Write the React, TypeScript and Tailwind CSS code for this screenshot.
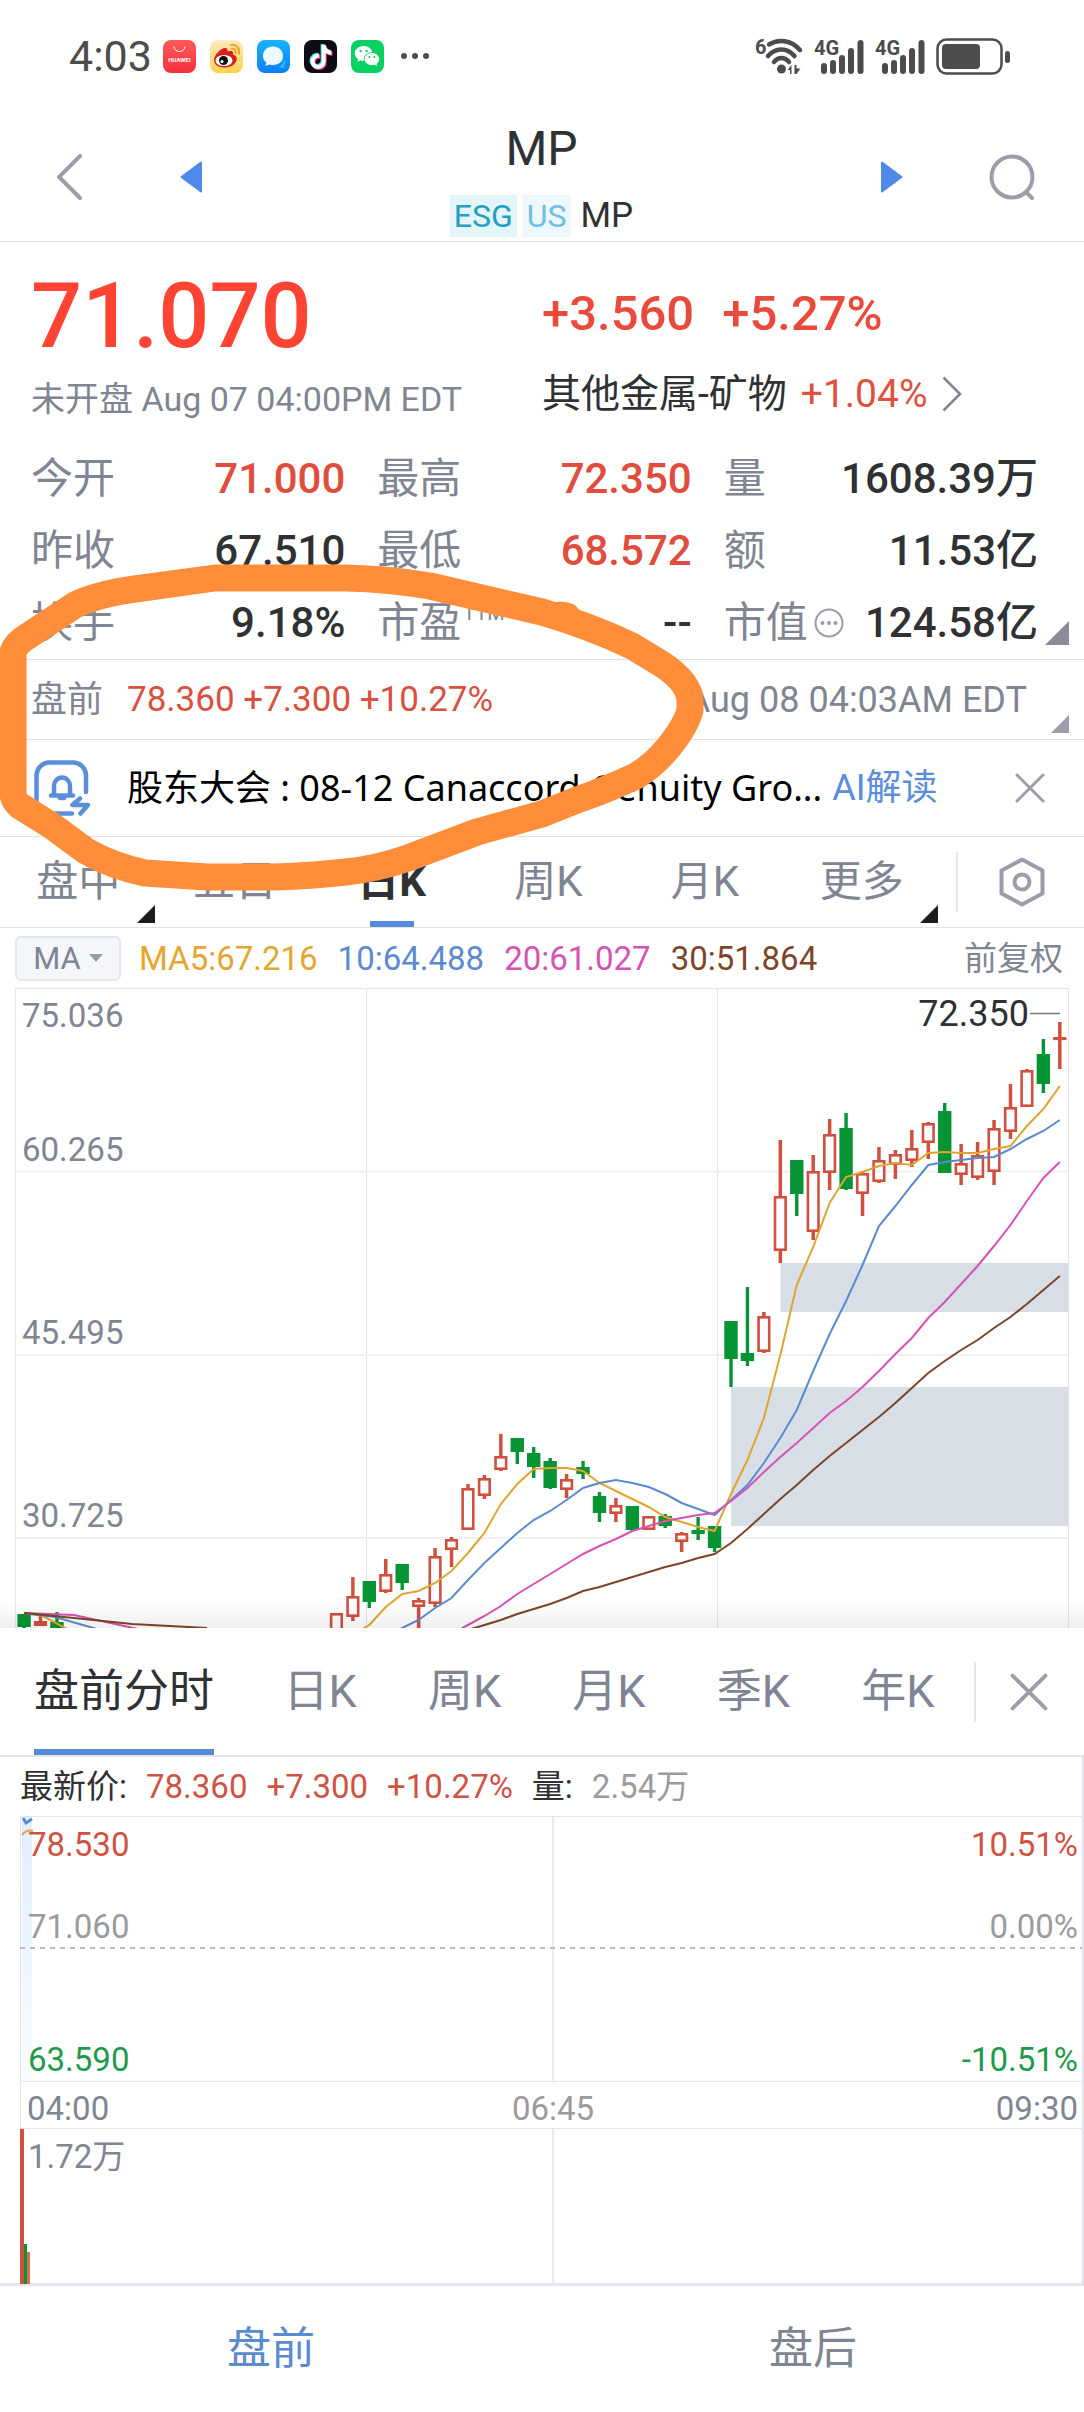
import { FaTiktok } from "react-icons/fa";
import { AiFillWechat } from "react-icons/ai";
import clsx from "clsx";

type Candle = {
  // bars back from the latest one
  k: number;
  up: boolean;
  high: number;
  top: number;
  bottom: number;
  low: number;
};

const STEP = 16.44;
const LAST_X = 1059.8;
const RED = "#d14f3f";
const GREEN = "#079434";

const barX = (k: number) => LAST_X - STEP * k;

const raw: [number, 0 | 1, number, number, number, number][] = [
  [0, 1, 1022, 1037, 1040, 1069],
  [1, 0, 1039, 1054, 1084, 1093],
  [2, 1, 1069, 1070, 1107, 1107],
  [3, 1, 1084, 1107, 1132, 1139],
  [4, 1, 1120, 1128, 1172, 1185],
  [5, 1, 1142, 1155, 1178, 1180],
  [6, 1, 1144, 1163, 1175, 1185],
  [7, 0, 1103, 1111, 1173, 1173],
  [8, 1, 1122, 1123, 1143, 1159],
  [9, 1, 1130, 1148, 1161, 1167],
  [10, 1, 1150, 1154, 1165, 1179],
  [11, 1, 1147, 1160, 1182, 1183],
  [12, 1, 1171, 1173, 1194, 1216],
  [13, 0, 1113, 1128, 1189, 1190],
  [14, 1, 1119, 1134, 1173, 1190],
  [15, 1, 1155, 1171, 1232, 1240],
  [16, 0, 1160, 1160, 1194, 1216],
  [17, 1, 1140, 1196, 1251, 1263],
  [18, 1, 1312, 1316, 1352, 1353],
  [19, 0, 1287, 1353, 1361, 1366],
  [20, 0, 1321, 1321, 1359, 1387],
  [21, 0, 1526, 1526, 1548, 1552],
  [22, 0, 1517, 1530, 1534, 1540],
  [23, 1, 1532, 1533, 1542, 1552],
  [24, 0, 1514, 1516, 1526, 1528],
  [25, 1, 1516, 1516, 1530, 1530],
  [26, 0, 1506, 1506, 1530, 1531],
  [27, 1, 1498, 1505, 1514, 1522],
  [28, 0, 1492, 1496, 1513, 1522],
  [29, 0, 1461, 1467, 1474, 1479],
  [30, 1, 1474, 1479, 1490, 1498],
  [31, 0, 1458, 1461, 1488, 1489],
  [32, 0, 1447, 1453, 1467, 1478],
  [33, 0, 1438, 1438, 1452, 1464],
  [34, 1, 1434, 1456, 1470, 1471],
  [35, 1, 1475, 1478, 1496, 1499],
  [36, 1, 1484, 1488, 1530, 1530],
  [37, 1, 1537, 1539, 1550, 1567],
  [38, 1, 1548, 1556, 1604, 1607],
  [39, 1, 1598, 1600, 1607, 1640],
  [40, 0, 1564, 1564, 1583, 1590],
  [41, 1, 1559, 1574, 1592, 1593],
  [42, 0, 1581, 1581, 1602, 1608],
  [43, 1, 1577, 1596, 1617, 1621],
  [44, 1, 1613, 1613, 1640, 1640],
  [61, 0, 1612, 1622, 1640, 1640],
  [62, 1, 1616, 1621, 1626, 1626],
  [63, 0, 1614, 1614, 1627, 1640],
];

const candles: Candle[] = raw.map(([k, up, high, top, bottom, low]) => ({
  k,
  up: up === 1,
  high,
  top,
  bottom,
  low,
}));

// newest value first
const averages = [
  {
    color: "#e0a52f",
    values: [
      1086, 1109, 1126, 1146, 1149, 1153, 1153, 1152, 1153, 1165, 1163, 1166,
      1172, 1177, 1203, 1247, 1285, 1355, 1418, 1460, 1494, 1531, 1527, 1522,
      1517, 1507, 1499, 1491, 1483, 1471, 1468, 1468, 1469, 1484, 1504, 1533,
      1553, 1571, 1583, 1591, 1594, 1607, 1625, 1635,
    ],
  },
  {
    color: "#5a8bd0",
    values: [
      1120, 1131, 1139, 1149, 1157, 1158, 1160, 1162, 1165, 1185, 1206, 1226,
      1265, 1301, 1334, 1371, 1410, 1438, 1463, 1485, 1500, 1515, 1509, 1503,
      1494, 1487, 1483, 1480, 1483, 1488, 1500, 1511, 1520, 1533, 1548, 1563,
      1580, 1598, 1608, 1620, 1628, 1637,
    ],
  },
  {
    color: "#d652b4",
    values: [
      1162, 1178, 1201, 1225, 1246, 1266, 1284, 1302, 1318, 1338, 1354, 1371,
      1387, 1401, 1413, 1428, 1443, 1457, 1472, 1488, 1501, 1513, 1515, 1518,
      1521, 1526, 1531, 1539, 1546, 1554, 1564, 1574, 1584, 1594, 1606, 1616,
      1625, 1634,
    ],
  },
  {
    color: "#7d4528",
    values: [
      1276, 1290, 1304, 1317, 1328, 1340, 1350, 1361, 1373, 1388, 1403, 1417,
      1430, 1443, 1456, 1470, 1485, 1499, 1514, 1529, 1543, 1554, 1558, 1563,
      1567, 1572, 1577, 1582, 1587, 1591, 1598, 1604, 1609, 1614, 1620, 1625,
      1630,
    ],
  },
];

const stats = [
  { label: "今开", value: "71.000", up: true },
  { label: "最高", value: "72.350", up: true },
  { label: "量", value: "1608.39万" },
  { label: "昨收", value: "67.510" },
  { label: "最低", value: "68.572", up: true },
  { label: "额", value: "11.53亿" },
  { label: "换手", value: "9.18%" },
  { label: "市盈", value: "--", note: "TTM" },
  { label: "市值", value: "124.58亿", info: true },
];

const periods = ["盘中", "五日", "日K", "周K", "月K", "更多"];
const panelPeriods = ["日K", "周K", "月K", "季K", "年K"];

function Corner({ className }: { className: string }) {
  return (
    <svg viewBox="0 0 10 10" className={clsx("absolute", className)}>
      <path d="M10 0V10H0Z" fill="currentColor" />
    </svg>
  );
}

function CloseIcon({ className }: { className: string }) {
  return (
    <svg viewBox="0 0 30 30" className={className}>
      <path
        d="M2 2 28 28M28 2 2 28"
        stroke="#9c9da8"
        strokeWidth="3"
        strokeLinecap="round"
      />
    </svg>
  );
}

function AppIcons() {
  return (
    <div className="flex items-center gap-3.5">
      <svg viewBox="0 0 33 33" className="size-[33px]">
        <defs>
          <linearGradient id="hw" x1="0" y1="0" x2="0" y2="1">
            <stop offset="0" stopColor="#ff5a58" />
            <stop offset="1" stopColor="#f52f3c" />
          </linearGradient>
        </defs>
        <rect width="33" height="33" rx="8" fill="url(#hw)" />
        <path
          d="M11 6.500a5.500 5 0 0 0 11 0"
          fill="none"
          stroke="#fff"
          strokeWidth="1"
        />
        <text
          x="16.500"
          y="21.500"
          fontSize="6"
          fontWeight="700"
          fill="#fff"
          textAnchor="middle"
        >
          HUAWEI
        </text>
      </svg>
      <svg viewBox="0 0 33 33" className="size-[33px]">
        <defs>
          <linearGradient id="wb" x1="0" y1="0" x2="0" y2="1">
            <stop offset="0" stopColor="#fdeac0" />
            <stop offset="1" stopColor="#ffd24a" />
          </linearGradient>
        </defs>
        <rect width="33" height="33" rx="8" fill="url(#wb)" />
        <path
          d="M4 20c0-5 7-12 11-12 2 0 3 1 2.500 3.500C21 10 24 11 23 14.500c3 1 4.500 3 3.500 6C25 25 20 27.500 14.500 27.500 8 27.500 4 24.500 4 20Z"
          fill="#d8201c"
        />
        <ellipse cx="14" cy="20.500" rx="8.500" ry="5.500" fill="#fff" />
        <circle cx="13.500" cy="20.500" r="4.500" fill="#111" />
        <circle cx="12" cy="21.500" r="1.500" fill="#fff" />
        <path
          d="M21 5c5-1 9 3 8 8.500M21.500 8.800c3-.5 4.500 1.500 4 4.200"
          fill="none"
          stroke="#f0a030"
          strokeWidth="2"
          strokeLinecap="round"
        />
      </svg>
      <svg viewBox="0 0 33 33" className="size-[33px]">
        <defs>
          <linearGradient id="msg" x1="0" y1="0" x2="0" y2="1">
            <stop offset="0" stopColor="#18b4fb" />
            <stop offset="1" stopColor="#0a80f4" />
          </linearGradient>
        </defs>
        <rect width="33" height="33" rx="8" fill="url(#msg)" />
        <path d="M20 27c5 0 6-3 7.500-8 1 4 0 6-1 6.500l1.500 2Z" fill="#31c4f8" />
        <path
          d="M16 6.500c6 0 10 4 10 9.500s-4 9-10 9c-1.500 0-2.500 0-3.500-.5L8.500 26l.8-3.500C7 21 6 18.500 6 16c0-5.500 4-9.500 10-9.500Z"
          fill="#eef8ff"
        />
      </svg>
      <span className="relative size-[33px] rounded-lg bg-[#0c0c16]">
        <FaTiktok className="absolute top-1 left-1 size-6 text-[#43e0dc]" />
        <FaTiktok className="absolute top-[6px] left-[6px] size-6 text-[#ee3357]" />
        <FaTiktok className="absolute top-[5px] left-[5px] size-6 text-white" />
      </span>
      <span className="flex size-[33px] items-center justify-center rounded-lg bg-[#07d163]">
        <AiFillWechat className="size-7 text-white" />
      </span>
    </div>
  );
}

function Signal() {
  return (
    <svg
      viewBox="0 0 50 36"
      className="h-9 w-[50px] overflow-visible"
      fill="#4c4c4c"
    >
      <text x="0" y="17" fontSize="20" fontWeight="700">
        4G
      </text>
      <rect x="7" y="25" width="6" height="11" rx="3" />
      <rect x="16" y="22" width="6" height="14" rx="3" />
      <rect x="25" y="17" width="6" height="19" rx="3" />
      <rect x="34" y="10" width="6" height="26" rx="3" />
      <rect x="43.500" y="2" width="6" height="34" rx="3" />
    </svg>
  );
}

function StatusBar() {
  return (
    <div className="flex h-28 items-center justify-between pr-[74px] pl-[69px]">
      <div className="flex items-center">
        <span className="mr-[11px] text-[43px] leading-none text-[#4c4c4c]">
          4:03
        </span>
        <AppIcons />
        <svg viewBox="0 0 28 6" className="ml-[17px] h-1.5 w-7" fill="#4c4c4c">
          <circle cx="3" cy="3" r="3" />
          <circle cx="14" cy="3" r="3" />
          <circle cx="25" cy="3" r="3" />
        </svg>
      </div>
      <div className="flex items-center gap-[11px]">
        <svg
          viewBox="0 0 48 36"
          className="h-9 w-12 overflow-visible"
          fill="#4c4c4c"
        >
          <text x="0" y="16" fontSize="20" fontWeight="700">
            6
          </text>
          <g
            fill="none"
            stroke="#4c4c4c"
            strokeWidth="4.500"
            strokeLinecap="round"
          >
            <path d="M14 6.500C23 .8 36 1.500 45 12" />
            <path d="M13 18C20 9.500 32 9 39.500 18" />
            <path d="M19 24c4-5.500 11-5.500 15 0" />
          </g>
          <circle cx="26.500" cy="31" r="4.500" />
          <path d="M32.500 32l4-5v9h-1.500v-4zM39.500 27h2v3.500h4L41.500 36h-2z" />
        </svg>
        <Signal />
        <Signal />
        <svg viewBox="0 0 74 37" className="h-[37px] w-[74px]">
          <rect
            x="1.500"
            y="1.500"
            width="64"
            height="34"
            rx="9"
            fill="none"
            stroke="#4c4c4c"
            strokeWidth="2.500"
          />
          <rect x="6" y="6" width="38" height="25" rx="4" fill="#4c4c4c" />
          <rect x="69" y="13" width="5" height="12" rx="2.500" fill="#4c4c4c" />
        </svg>
      </div>
    </div>
  );
}

function Header() {
  return (
    <header className="flex h-[130px] items-center justify-between border-b border-[#e2e2e6] pr-[49px] pl-[57px]">
      <div className="flex items-center gap-[98px]">
        <button type="button" aria-label="返回">
          <svg viewBox="0 0 25 46" className="h-[46px] w-[25px]">
            <path
              d="M23 2 2 23l21 21"
              fill="none"
              stroke="#9c9da8"
              strokeWidth="4"
              strokeLinecap="round"
            />
          </svg>
        </button>
        <button type="button" aria-label="上一个">
          <svg viewBox="0 0 22 32" className="h-8 w-[22px]">
            <path
              d="M21 1.500v29L1.500 16Z"
              fill="#4f8ae8"
              stroke="#4f8ae8"
              strokeWidth="2"
              strokeLinejoin="round"
            />
          </svg>
        </button>
      </div>
      <div className="flex flex-col items-center">
        <h1 className="text-[48px] leading-[64px] text-[#303133]">MP</h1>
        <div className="mt-3.5 flex h-[42px] items-center gap-1.5 text-[32px] leading-[42px]">
          <span className="bg-[#e4f5fa] px-1 text-[#23a0bd]">ESG</span>
          <span className="bg-[#ecf8fc] px-1 text-[#6fbfe0]">US</span>
          <span className="ml-1 text-[35px] text-[#303133]">MP</span>
        </div>
      </div>
      <div className="flex items-center gap-[86px]">
        <button type="button" aria-label="下一个">
          <svg viewBox="0 0 22 32" className="h-8 w-[22px]">
            <path
              d="M1 1.500v29L20.500 16Z"
              fill="#4f8ae8"
              stroke="#4f8ae8"
              strokeWidth="2"
              strokeLinejoin="round"
            />
          </svg>
        </button>
        <button type="button" aria-label="搜索">
          <svg viewBox="0 0 46 46" className="size-[46px]">
            <g fill="none" stroke="#9c9da8" strokeWidth="4">
              <circle cx="23" cy="23" r="20.500" />
              <path d="m37 38 6 6" strokeLinecap="round" />
            </g>
          </svg>
        </button>
      </div>
    </header>
  );
}

function Quote() {
  return (
    <section className="relative border-b border-[#e2e2e6] pt-7">
      <div className="grid grid-cols-2">
        <div className="pl-[31px]">
          <p className="text-[90px] leading-[94px] font-medium text-[#ff4433]">
            71.070
          </p>
          <p className="mt-[15px] text-[34px] leading-10 text-[#7f8592]">
            未开盘 Aug 07 04:00PM EDT
          </p>
        </div>
        <div>
          <p className="flex gap-7 text-[49px] leading-[88px] font-medium text-[#ea4a3c]">
            <span>+3.560</span>
            <span>+5.27%</span>
          </p>
          <button
            type="button"
            className="mt-4 flex items-center gap-3.5 text-[39px] leading-10 text-[#303133]"
          >
            其他金属-矿物
            <span className="text-[#e0503f]">+1.04%</span>
            <svg viewBox="0 0 20 36" className="h-9 w-5">
              <path
                d="M1.500 1.500 18 18 1.500 34.500"
                fill="none"
                stroke="#7f8592"
                strokeWidth="2.500"
              />
            </svg>
          </button>
        </div>
      </div>
      <dl className="mt-6 grid grid-cols-3 gap-x-8 pr-[46px] pl-[31px] text-[42px] leading-[72px]">
        {stats.map((s) => (
          <div key={s.label} className="flex h-[72px] justify-between">
            <dt className="flex items-center text-[#7f8592]">
              {s.label}
              {s.note && (
                <sup className="ml-0.5 text-xl leading-none">{s.note}</sup>
              )}
              {s.info && (
                <svg viewBox="0 0 30 30" className="ml-1.5 size-[30px]">
                  <circle
                    cx="15"
                    cy="15"
                    r="13.500"
                    fill="none"
                    stroke="#9a9ca8"
                    strokeWidth="2"
                  />
                  <g fill="#9a9ca8">
                    <circle cx="8.500" cy="15" r="2" />
                    <circle cx="15" cy="15" r="2" />
                    <circle cx="21.500" cy="15" r="2" />
                  </g>
                </svg>
              )}
            </dt>
            <dd
              className={clsx(
                "font-medium",
                s.up ? "text-[#e04c3e]" : "text-[#303133]"
              )}
            >
              {s.value}
            </dd>
          </div>
        ))}
      </dl>
      <Corner className="right-[15px] bottom-3.5 size-6 text-[#8a8c98]" />
    </section>
  );
}

function PreMarket() {
  return (
    <section className="relative flex h-20 items-center justify-between border-b border-[#e2e2e6] pr-[57px] pl-[31px] text-[36px] leading-none">
      <div className="flex items-center gap-6 text-[#7f8592]">
        盘前
        <span className="text-[35px] text-[#d9503f]">
          78.360 +7.300 +10.27%
        </span>
      </div>
      <span className="text-[#7f8592]">Aug 08 04:03AM EDT</span>
      <Corner className="right-[15px] bottom-1.5 size-[18px] text-[#9c9da8]" />
    </section>
  );
}

function News() {
  return (
    <section className="flex h-[97px] items-center border-b border-[#e2e2e6] pr-[39px] pl-[34px] text-[36px] leading-none text-black">
      <svg
        viewBox="0 0 58 56"
        className="mr-[35px] h-14 w-[58px] shrink-0"
        fill="none"
        stroke="#5a8edb"
        strokeWidth="4.500"
        strokeLinecap="round"
        strokeLinejoin="round"
      >
        <path d="M52 32V15A13 13 0 0 0 39 2.500H15A13 13 0 0 0 2.500 15v26A13 13 0 0 0 15 53.500h23" />
        <path d="M20 35V26a8 8.500 0 0 1 16 0v9M17 35.500h22M26 38h4" />
        <path d="M46 38.500 38.500 45H54l-7.500 8.500" />
      </svg>
      <p className="min-w-0 truncate font-['Noto_Sans','Noto_Sans_CJK_SC',sans-serif] leading-[48px]">
        股东大会 : 08-12 Canaccord Genuity Gro...
      </p>
      <a href="#ai" className="ml-2.5 shrink-0 text-[#5a8edb]">
        AI解读
      </a>
      <button type="button" aria-label="关闭公告" className="ml-auto">
        <CloseIcon className="size-[30px]" />
      </button>
    </section>
  );
}

function PeriodTabs() {
  return (
    <nav className="flex h-[91px] items-center border-b border-[#e2e2e6]">
      <div className="grid h-full flex-1 grid-cols-6">
        {periods.map((p) => (
          <button
            key={p}
            type="button"
            className={clsx(
              "relative text-[42px] leading-none",
              p === "日K" ? "font-bold text-[#303133]" : "text-[#7f8592]"
            )}
          >
            {p}
            {p === "日K" && (
              <span className="absolute bottom-0 left-1/2 h-1.5 w-11 -translate-x-1/2 bg-[#558bda]" />
            )}
            {(p === "盘中" || p === "更多") && (
              <Corner className="right-0.5 bottom-1 size-[18px] text-[#1c1c1c]" />
            )}
          </button>
        ))}
      </div>
      <div className="ml-4 flex h-[60px] w-32 items-center border-l-2 border-[#e3e4ec] pl-[41px]">
        <button type="button" aria-label="设置">
          <svg
            viewBox="0 0 46 50"
            className="h-[50px] w-[46px]"
            fill="none"
            stroke="#9c9da8"
            strokeWidth="4"
            strokeLinejoin="round"
          >
            <path d="M23 2.500 43.500 13.500v23L23 47.500 2.500 36.500v-23Z" />
            <circle cx="23" cy="25" r="7.500" />
          </svg>
        </button>
      </div>
    </nav>
  );
}

function Averages() {
  return (
    <div className="flex h-[60px] items-center pr-[21px] pl-[15px] text-[33px] leading-none">
      <button
        type="button"
        className="mr-[18px] flex h-[45px] w-[106px] items-center justify-center gap-2 rounded-md border-2 border-[#e4e6ee] bg-[#f5f6fa] text-[31px] text-[#7f8592]"
      >
        MA
        <svg viewBox="0 0 14 8" className="h-2 w-3.5">
          <path d="M0 0h14L7 8Z" fill="#9a9ca8" />
        </svg>
      </button>
      <div className="flex gap-5">
        <span className="text-[#e5a52f]">MA5:67.216</span>
        <span className="text-[#5a8bd0]">10:64.488</span>
        <span className="text-[#d652b4]">20:61.027</span>
        <span className="text-[#7d4528]">30:51.864</span>
      </div>
      <button type="button" className="ml-auto text-[33px] text-[#7f8592]">
        前复权
      </button>
    </div>
  );
}

function DailyChart() {
  return (
    <svg viewBox="0 988 1084 640" className="block w-full">
      <defs>
        <linearGradient id="fade" x1="0" y1="0" x2="0" y2="1">
          <stop offset="0" stopColor="#000" stopOpacity="0" />
          <stop offset="1" stopColor="#000" stopOpacity="0.06" />
        </linearGradient>
      </defs>
      <g stroke="#e4e4ee" strokeWidth="1">
        <path
          d="M15.500 1640V988.500H1068.500V1640M366.500 988V1640M717.500 988V1640"
          fill="none"
        />
      </g>
      <path
        d="M16 1171.500H1068M16 1355H1068M16 1538H1068"
        stroke="#f1f1f4"
        strokeWidth="2"
      />

      {/* open gaps */}
      <rect x="780.500" y="1263" width="288" height="49" fill="#d8dee6" />
      <rect x="731" y="1387" width="337.500" height="139" fill="#d8dee6" />

      {candles.map((c) => {
        const x = barX(c.k);
        return c.up ? (
          <g key={c.k} stroke={RED} fill="none">
            <path
              d={`M${x} ${c.high}V${c.top}M${x} ${c.bottom}V${c.low}`}
              strokeWidth="3.500"
            />
            <rect
              x={x - 5.3}
              y={c.top + 1.3}
              width="10.600"
              height={Math.max(c.bottom - c.top - 2.6, 0.5)}
              strokeWidth="2.600"
            />
          </g>
        ) : (
          <g key={c.k} fill={GREEN}>
            <rect x={x - 1.7} y={c.high} width="3.400" height={c.low - c.high} />
            <rect
              x={x - 6.7}
              y={c.top}
              width="13.400"
              height={c.bottom - c.top}
            />
          </g>
        );
      })}

      {averages.map((a) => (
        <polyline
          key={a.color}
          points={a.values.map((y, k) => `${barX(k)},${y}`).join(" ")}
          fill="none"
          stroke={a.color}
          strokeWidth="2"
        />
      ))}
      <g fill="none" strokeWidth="2">
        <path d="M24 1613 43 1616 67 1629" stroke="#e0a52f" />
        <path d="M24 1613 55 1617 97 1629" stroke="#5a8bd0" />
        <path d="M24 1613 74 1615 138 1629" stroke="#d652b4" />
        <path d="M24 1613 74 1618 132 1624 207 1628" stroke="#7d4528" />
      </g>

      <g fontSize="33" fill="#7f8592">
        <text x="22" y="1027">75.036</text>
        <text x="22" y="1161">60.265</text>
        <text x="22" y="1344">45.495</text>
        <text x="22" y="1527">30.725</text>
      </g>
      <text x="1029" y="1026" fontSize="36" fill="#303133" textAnchor="end">
        72.350
      </text>
      <path d="M1030 1013.500H1060" stroke="#777" strokeWidth="1.500" />
      <rect x="0" y="1600" width="1084" height="28" fill="url(#fade)" />
    </svg>
  );
}

function PanelTabs() {
  return (
    <nav className="flex h-[129px] items-center border-b-2 border-[#e3e4ec] pl-[34px] text-[45px] leading-none">
      <button
        type="button"
        className="relative h-full w-[180px] shrink-0 text-[#303133]"
      >
        盘前分时
        <span className="absolute inset-x-0 bottom-0 h-1.5 bg-[#558bda]" />
      </button>
      <div className="mr-1 ml-[34px] grid h-full flex-1 grid-cols-5">
        {panelPeriods.map((p) => (
          <button key={p} type="button" className="text-[#7f8592]">
            {p}
          </button>
        ))}
      </div>
      <div className="flex h-[60px] w-[110px] items-center border-l-2 border-[#e3e4ec] pl-[34px]">
        <button type="button" aria-label="关闭面板">
          <CloseIcon className="size-[38px]" />
        </button>
      </div>
    </nav>
  );
}

function IntradayChart() {
  return (
    <svg viewBox="0 1816 1084 470" className="block w-full">
      <defs>
        <linearGradient id="area" x1="0" y1="0" x2="0" y2="1">
          <stop offset="0" stopColor="#e0eefd" />
          <stop offset="1" stopColor="#f8fbff" />
        </linearGradient>
      </defs>
      <rect x="22" y="1817" width="10" height="264" fill="url(#area)" />
      <g stroke="#e3e4ec" strokeWidth="1" fill="none">
        <path d="M20 1816.500H1082M20.500 1816V2284M20 2081.500H1082M20 2128.500H1082" />
        <path d="M553 1816V2081M553 2128V2284" strokeWidth="1.500" />
      </g>
      <path d="M0 2284.500H1084" stroke="#e3e4ec" strokeWidth="3" />
      <path
        d="M20 1948H1082"
        stroke="#a8a8ac"
        strokeWidth="1.500"
        strokeDasharray="5 5"
      />
      <path
        d="M23 1818 26 1823 32 1819"
        fill="none"
        stroke="#5a8bd0"
        strokeWidth="3"
      />
      <path
        d="M22 1835q5-6 11-4"
        fill="none"
        stroke="#d9a05a"
        strokeWidth="2"
      />
      <rect x="20" y="2129" width="4" height="155" fill={RED} />
      <rect x="24" y="2244" width="3" height="40" fill={GREEN} />
      <rect x="27" y="2252" width="3" height="32" fill="#e2694f" />

      <g fontSize="33">
        <g fill="#cf5243">
          <text x="28" y="1856">78.530</text>
          <text x="1078" y="1856" textAnchor="end">10.51%</text>
        </g>
        <g fill="#9b9b9f">
          <text x="28" y="1938">71.060</text>
          <text x="1078" y="1938" textAnchor="end">0.00%</text>
          <text x="553" y="2120" textAnchor="middle">06:45</text>
        </g>
        <g fill="#1f9a4a">
          <text x="28" y="2071">63.590</text>
          <text x="1078" y="2071" textAnchor="end">-10.51%</text>
        </g>
        <g fill="#7f8592">
          <text x="27" y="2120">04:00</text>
          <text x="1078" y="2120" textAnchor="end">09:30</text>
          <text x="28" y="2168">1.72万</text>
        </g>
      </g>
    </svg>
  );
}

function Panel() {
  return (
    <section>
      <PanelTabs />
      <div className="border-r-2 border-[#e3e4ec]">
        <div className="flex h-[59px] items-center gap-[19px] pl-5 text-[33px] leading-none text-[#cf5243]">
          <span className="text-[#303133]">最新价:</span>
          <span>78.360</span>
          <span>+7.300</span>
          <span>+10.27%</span>
          <span className="text-[#303133]">量:</span>
          <span className="text-[#9b9b9f]">2.54万</span>
        </div>
      </div>
      <div className="relative">
        <IntradayChart />
        <span className="absolute inset-y-0 right-0 w-0.5 bg-[#e3e4ec]" />
      </div>
      <div className="grid h-[126px] grid-cols-2 text-[44px] leading-none">
        <button type="button" className="text-[#5a8bd0]">
          盘前
        </button>
        <button type="button" className="text-[#7f8592]">
          盘后
        </button>
      </div>
    </section>
  );
}

// hand-drawn ring over the pre-market quote
function Marker() {
  return (
    <svg
      viewBox="0 550 1084 350"
      className="pointer-events-none absolute inset-x-0 top-[550px] w-full"
      fill="none"
      stroke="#ff8d3a"
      strokeWidth="27"
      strokeLinejoin="round"
      strokeLinecap="round"
    >
      <path d="M13 795V652Q16 643 28 636L75 605Q98 594 135 589L215 578H346Q390 579 430 586L542 612Q590 626 632 646L660 663Q690 682 690 702V710Q686 726 668 748Q654 765 636 776Q606 790 577 800L542 814L477 832L408 858Q376 869 346 872Q310 876 276 877H207L145 873Q112 866 86 851L52 826L20 806Q13 800 13 793" />
      <path d="M560 615 567 616" />
    </svg>
  );
}

export default function App() {
  return (
    <main className="relative w-full bg-white font-['Roboto','Noto_Sans_CJK_SC',sans-serif]">
      <StatusBar />
      <Header />
      <Quote />
      <PreMarket />
      <News />
      <PeriodTabs />
      <Averages />
      <DailyChart />
      <Panel />
      <Marker />
    </main>
  );
}
